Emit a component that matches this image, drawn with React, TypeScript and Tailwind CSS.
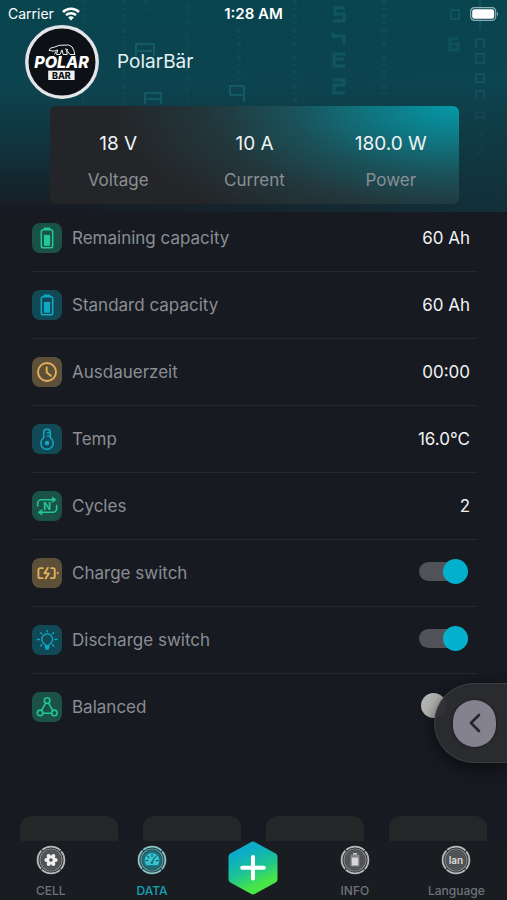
import { useState, type ReactNode } from 'react';
import { ChevronLeft } from 'lucide-react';

type Tone = 'green' | 'cyan' | 'amber';

const TONES: Record<Tone, string> = {
  green: 'bg-[#1a5248] text-[#22c793]',
  cyan: 'bg-[#114956] text-[#0fa9c6]',
  amber: 'bg-[#5d5038] text-[#e6b05a]',
};

function BatteryIcon() {
  return (
    <g>
      <rect x="9" y="6.5" width="11" height="17.5" rx="2" />
      <path d="M12 5.3h5" strokeWidth="1.8" />
      <rect x="11.5" y="11.5" width="6" height="10.5" fill="currentColor" stroke="none" />
    </g>
  );
}

function ClockIcon() {
  return (
    <g strokeWidth="1.8">
      <circle cx="14.5" cy="14.5" r="8.7" />
      <path d="M14.2 9.8v5.2l4 3.2" />
    </g>
  );
}

function ThermometerIcon() {
  return (
    <g>
      <path d="M11.3 13.4V8.2a3.2 3.2 0 0 1 6.4 0v5.2a6 6 0 1 1-6.4 0z" />
      <circle cx="14.5" cy="18.4" r="1.5" fill="currentColor" />
      <path d="M14.4 8.5h3M14.4 11.5h3" strokeWidth="1.2" />
    </g>
  );
}

function CycleIcon() {
  return (
    <g>
      <path d="M5.5 14.5V12a3.6 3.6 0 0 1 3.6-3.6H21" />
      <path d="M19.8 5.9l3.6 2.5-3.6 2.5z" fill="currentColor" strokeWidth="0.6" />
      <path d="M23.8 14v3a3.6 3.6 0 0 1-3.6 3.6H8" />
      <path d="M9.4 18.1l-3.6 2.5 3.6 2.5z" fill="currentColor" strokeWidth="0.6" />
      <text
        x="14.7"
        y="18"
        textAnchor="middle"
        fill="currentColor"
        stroke="none"
        className="font-['Inter',sans-serif] text-[10px] font-bold"
      >
        N
      </text>
    </g>
  );
}

function ChargeIcon() {
  return (
    <g strokeWidth="1.8">
      <path d="M10.5 9.8H7.8a1.6 1.6 0 0 0-1.6 1.6v6.4a1.6 1.6 0 0 0 1.6 1.6h2.4" />
      <path d="M18.6 9.8h1.8a1.6 1.6 0 0 1 1.6 1.6v6.4a1.6 1.6 0 0 1-1.6 1.6h-2.2" />
      <path d="M15.4 9.4L12 14.8h4.4l-3.2 5" />
      <circle cx="24.8" cy="14.6" r="1" fill="currentColor" stroke="none" />
    </g>
  );
}

function BulbIcon() {
  return (
    <g strokeWidth="1.3">
      <path d="M12.3 18.4a5.2 5.2 0 1 1 4.8 0l-1 1.6h-2.8z" />
      <path d="M13.2 21.4H16M13.8 23h1.6" strokeWidth="2" />
      <path d="M14.7 5.2v1.4M8.3 7.4l1.2 1.2M21 7.4l-1.2 1.2M5.2 14h2M22.2 14h2M8.2 20.4l1.3-1.3M21.2 20.4l-1.3-1.3" />
    </g>
  );
}

function BalanceIcon() {
  return (
    <g strokeWidth="1.5">
      <circle cx="14.6" cy="8.3" r="2.7" />
      <circle cx="7.8" cy="20.2" r="2.7" />
      <circle cx="21.6" cy="20.2" r="2.7" />
      <path d="M13.2 10.8l-4 7M16 10.8l4.1 7M10.6 20.6h8.2" />
    </g>
  );
}

function IconTile({ tone, children }: { tone: Tone; children: ReactNode }) {
  return (
    <span className={`block size-[30px] shrink-0 rounded-lg ${TONES[tone]}`}>
      <svg
        viewBox="0 0 29 29"
        className="size-full"
        fill="none"
        stroke="currentColor"
        strokeWidth="1.5"
        strokeLinecap="round"
        strokeLinejoin="round"
        aria-hidden="true"
      >
        {children}
      </svg>
    </span>
  );
}

/** Faint falling characters behind the header. */
function CodeRain() {
  return (
    <svg
      viewBox="0 0 507 212"
      preserveAspectRatio="none"
      className="absolute inset-0 size-full"
      fill="none"
      stroke="#2a9dac"
      aria-hidden="true"
    >
      <g opacity="0.26" strokeWidth="2">
        <path d="M136 56V44h18v12M138 51h14" />
        <path d="M145 104V93h16v11M147 99h13" />
        <path d="M230 95v-9h14v16M230 95h14" />
      </g>
      <g opacity="0.07" strokeWidth="3" strokeDasharray="5 3 2 4">
        <path d="M124 0v105M146 0v14" />
        <path d="M187 5v100" />
        <path d="M239 28v56" strokeWidth="4" />
        <path d="M295 0v104" strokeWidth="4" />
        <path d="M384 0v96" strokeWidth="5" />
        <path d="M83 0v104" />
      </g>
      <g opacity="0.2" strokeWidth="3">
        <path d="M345 8h-10v6h9v7h-11" />
        <path d="M333 33v3h11v8" />
        <path d="M345 54h-11v5h10M334 59v7h11" />
        <path d="M333 80h11v5h-10v8h11" />
      </g>
      <g opacity="0.16" strokeWidth="2">
        <path d="M451 10h8v9h-8z" />
        <path d="M458 39h-8v11h8v-6h-8" strokeWidth="3" />
        <path d="M480 0v12M480 18v12" />
        <path d="M476 48v-9h8v9M476 54h8v9h-8z" />
        <path d="M476 74h8v8h-8zM476 99v-8h8v8" />
        <path d="M476 112h8v6h-8z" opacity="0.6" />
        <path d="M478 132l6 3M478 154l6-8" opacity="0.5" />
      </g>
    </svg>
  );
}

function StatusBar() {
  return (
    <div className="relative grid h-7 grid-cols-3 items-center px-2 text-white">
      <div className="flex items-center gap-2 text-sm">
        <span>Carrier</span>
        <svg viewBox="0 0 18 14" className="h-[14px] w-[18px]" fill="none" stroke="currentColor" aria-label="Wi-Fi">
          <path d="M1 5a11.5 11.5 0 0 1 16 0" strokeWidth="2.6" />
          <path d="M4 8.2a7.2 7.2 0 0 1 10 0" strokeWidth="2.4" />
          <path d="M9 13.6l-2.8-3a4 4 0 0 1 5.6 0z" fill="currentColor" stroke="none" />
        </svg>
      </div>
      <span className="text-center text-[15px] leading-5 font-semibold">1:28 AM</span>
      <svg viewBox="0 0 29 14" className="h-[14px] w-[29px] justify-self-end" aria-label="Battery full">
        <rect x="0.7" y="0.7" width="25" height="12.6" rx="3.6" fill="none" stroke="#8fb0b6" strokeWidth="1.2" />
        <rect x="2.2" y="2.2" width="22" height="9.6" rx="2.2" fill="white" />
        <path d="M27 5v4a2.4 2.4 0 0 0 0-4z" fill="#8fb0b6" />
      </svg>
    </div>
  );
}

function Logo() {
  return (
    <svg viewBox="0 0 74 74" className="size-[74px]" role="img" aria-label="Polar Bär">
      <circle cx="37" cy="37" r="35.2" fill="#0d1116" stroke="#e3e5ea" strokeWidth="3.4" />
      <g fill="none" stroke="#f2f2f2" strokeLinejoin="round">
        <path d="M24 25.4l1.4-2.2 4.4-1.2 4.6-1.7 9.2-.3 3.6 2 2 4.4.6 3.6" />
        <path d="M24 25.4l5 .8 3.6-1.3-1 4.6H35l2-4.6 1.2 4.6h4l-.6-4.4 3.4 4.4h4.8" />
        <path d="M29.6 29.4l1.6-3M40 23.8l3 1" />
      </g>
      <rect x="23.2" y="45.6" width="26.4" height="9.4" fill="#f0f0f0" />
      <text textAnchor="middle" className="font-['Inter',sans-serif] font-extrabold">
        <tspan x="36.6" y="43" fill="white" className="text-[16px] italic">
          POLAR
        </tspan>
        <tspan x="36.4" y="53.6" fill="#0d1116" className="text-[9px]">
          BAR
        </tspan>
      </text>
    </svg>
  );
}

const STATS = [
  { label: 'Voltage', value: '18 V' },
  { label: 'Current', value: '10 A' },
  { label: 'Power', value: '180.0 W' },
];

function Header() {
  return (
    <header className="relative bg-[linear-gradient(to_bottom,#08454f_0%,#0c434e_42%,#123039_74%,#171a22_100%)] pb-2">
      <div className="absolute inset-0 bg-[radial-gradient(ellipse_at_bottom_right,#0d4651_0%,transparent_60%)] opacity-50" />
      <CodeRain />
      <StatusBar />
      <div className="relative -mt-[3px] flex items-center gap-[18px] px-[25px] pb-[7px]">
        <Logo />
        <h1 className="text-[19px] leading-7 text-[#e4f3f6]">PolarBär</h1>
      </div>
      <dl className="relative mr-12 ml-[50px] grid h-[98px] grid-cols-3 rounded-md bg-[#242528] bg-[radial-gradient(ellipse_85%_145%_at_top_right,#0599a8_0%,#0f7681_25%,#1a525a_48%,#22373c_72%,transparent_100%)] pt-[26px] text-center">
        {STATS.map((stat) => (
          <div key={stat.label} className="flex flex-col-reverse justify-end gap-3">
            <dt className="text-[17px] leading-6 text-[#8a8f94]">{stat.label}</dt>
            <dd className="text-[19px] leading-6 text-[#edf3f4]">{stat.value}</dd>
          </div>
        ))}
      </dl>
    </header>
  );
}

function RowShell({ children }: { children: ReactNode }) {
  return (
    <li className="flex h-[67px] items-center gap-[10px] border-b border-[#25282c] pr-[7px] last:border-transparent">
      {children}
    </li>
  );
}

const READINGS: { label: string; value: string; tone: Tone; icon: ReactNode }[] = [
  { label: 'Remaining capacity', value: '60 Ah', tone: 'green', icon: <BatteryIcon /> },
  { label: 'Standard capacity', value: '60 Ah', tone: 'cyan', icon: <BatteryIcon /> },
  { label: 'Ausdauerzeit', value: '00:00', tone: 'amber', icon: <ClockIcon /> },
  { label: 'Temp', value: '16.0°C', tone: 'cyan', icon: <ThermometerIcon /> },
  { label: 'Cycles', value: '2', tone: 'green', icon: <CycleIcon /> },
];

const SWITCHES: { id: string; label: string; tone: Tone; icon: ReactNode }[] = [
  { id: 'charge', label: 'Charge switch', tone: 'amber', icon: <ChargeIcon /> },
  { id: 'discharge', label: 'Discharge switch', tone: 'cyan', icon: <BulbIcon /> },
  { id: 'balanced', label: 'Balanced', tone: 'green', icon: <BalanceIcon /> },
];

function Readings() {
  const [on, setOn] = useState<Record<string, boolean>>({ charge: true, discharge: true, balanced: false });

  return (
    <ul className="relative -mt-[7px] mr-[30px] ml-8 text-[17px] leading-6">
      {READINGS.map((row) => (
        <RowShell key={row.label}>
          <IconTile tone={row.tone}>{row.icon}</IconTile>
          <span className="flex-1 text-[#8a8e94]">{row.label}</span>
          <span className="text-[#f1f2f3]">{row.value}</span>
        </RowShell>
      ))}
      {SWITCHES.map((row) => (
        <RowShell key={row.id}>
          <IconTile tone={row.tone}>{row.icon}</IconTile>
          <label htmlFor={row.id} className="flex-1 text-[#8a8e94]">
            {row.label}
          </label>
          <input
            id={row.id}
            type="checkbox"
            role="switch"
            checked={on[row.id]}
            onChange={(e) => setOn({ ...on, [row.id]: e.target.checked })}
            className="relative mb-1 h-[25px] w-[51px] cursor-pointer appearance-none before:absolute before:inset-x-0 before:top-[3px] before:h-[19px] before:rounded-full before:bg-[#515257] after:absolute after:top-0 after:left-[2px] after:size-[25px] after:rounded-full after:bg-[#b5b6b4] checked:before:right-[3px] checked:after:left-[24px] checked:after:bg-[#04b1cd] not-checked:before:left-4 not-checked:before:bg-[#303236]"
          />
        </RowShell>
      ))}
    </ul>
  );
}

function Badge({ active, children }: { active?: boolean; children: ReactNode }) {
  return (
    <svg viewBox="0 0 30 30" className="size-[30px]" fill="none" aria-hidden="true">
      <circle cx="15" cy="15" r="14" fill={active ? '#17383e' : '#292b2d'} />
      <circle
        cx="15"
        cy="15"
        r="13.4"
        stroke={active ? '#8fc4c6' : '#b9babb'}
        strokeWidth="1.8"
        strokeDasharray="20 1.05"
        strokeDashoffset="10"
      />
      <circle cx="15" cy="15" r="11" stroke={active ? '#5b9da2' : '#858688'} strokeWidth="1.2" />
      <circle
        cx="15"
        cy="15"
        r="9.4"
        fill={active ? '#1b6973' : '#505153'}
        stroke={active ? '#337982' : '#6b6c6e'}
        strokeWidth="0.8"
      />
      {children}
    </svg>
  );
}

function Tab({ label, active, children }: { label: string; active?: boolean; children: ReactNode }) {
  return (
    <button
      type="button"
      aria-current={active ? 'page' : undefined}
      className={`flex flex-col items-center gap-2 pt-1 text-xs leading-4 font-medium ${active ? 'text-[#14a3b8]' : 'text-[#6f7379]'}`}
    >
      <Badge active={active}>{children}</Badge>
      {label}
    </button>
  );
}

function TabBar() {
  return (
    <nav className="grid h-[59px] grid-cols-5 bg-[#191c21]">
      <Tab label="CELL">
        <g fill="#f0f0f0">
          <circle cx="15" cy="15" r="4.6" />
          <circle cx="19.6" cy="15" r="2" />
          <circle cx="10.4" cy="15" r="2" />
          <circle cx="12.6" cy="11" r="2" />
          <circle cx="17.4" cy="11" r="2" />
          <circle cx="12.6" cy="19" r="2" />
          <circle cx="17.4" cy="19" r="2" />
        </g>
        <circle cx="15" cy="15" r="1.8" fill="#505153" />
      </Tab>
      <Tab label="DATA" active>
        <path d="M8.8 19.4a7.4 7.4 0 1 1 12.4 0c-.4.6-1 .8-1.6.8h-9.2c-.6 0-1.2-.2-1.6-.8z" fill="#37c4d2" />
        <path
          d="M15 17.8l2.3-5M15 9.4v2M10.6 11.2l1.2 1.4M8.8 15.6h2M19.3 15.6h2M19.2 11l-.8 1"
          stroke="#145f69"
          strokeWidth="1.2"
          strokeLinecap="round"
        />
        <circle cx="14.8" cy="17.6" r="1.2" fill="#145f69" />
      </Tab>
      <button type="button" aria-label="Add" className="flex items-start justify-center">
        <svg viewBox="0 0 50 54" className="h-[54px] w-[50px]" aria-hidden="true">
          <defs>
            <linearGradient id="hex" gradientUnits="userSpaceOnUse" x1="14" y1="2" x2="36" y2="52">
              <stop offset="0.15" stopColor="#0cabc9" />
              <stop offset="0.52" stopColor="#1cc492" />
              <stop offset="0.82" stopColor="#48e548" />
            </linearGradient>
          </defs>
          <path
            d="M25 4l21 11.5v23L25 50 4 38.5v-23z"
            fill="url(#hex)"
            stroke="url(#hex)"
            strokeWidth="7"
            strokeLinejoin="round"
          />
          <path d="M25 16v21.5M14.2 26.8h21.6" stroke="white" strokeWidth="4" strokeLinecap="round" />
        </svg>
      </button>
      <Tab label="INFO">
        <rect x="10.5" y="9.5" width="9" height="12" rx="1.2" fill="#85868a" />
        <rect x="11.8" y="12.6" width="6.4" height="7.8" fill="#d6d7d8" />
        <path d="M13 8.8h4" stroke="#c9cacb" strokeWidth="1.6" />
      </Tab>
      <Tab label="Language">
        <text
          x="15"
          y="18.5"
          textAnchor="middle"
          fill="#dcdddd"
          className="font-['Inter',sans-serif] text-[10px] font-semibold"
        >
          lan
        </text>
      </Tab>
    </nav>
  );
}

export default function App() {
  return (
    <div className="relative flex min-h-screen flex-col overflow-hidden bg-[#171a21] font-['Inter',sans-serif]">
      <Header />
      <Readings />
      <button
        type="button"
        aria-label="Open panel"
        className="absolute top-[683px] right-0 flex h-20 w-[73px] items-center rounded-l-full border border-r-0 border-[#3c3e41] bg-[#2b2c2f]/95 pl-[18px] shadow-[0_4px_16px_rgba(0,0,0,0.6)]"
      >
        <span className="flex h-[47px] w-[43px] items-center justify-center rounded-full bg-[#85828f] shadow-[0_0_3px_rgba(0,0,0,0.6)]">
          <ChevronLeft className="size-8 text-[#25262b]" strokeWidth={2} />
        </span>
      </button>
      <div className="mt-auto grid grid-cols-4 gap-[25px] px-5">
        {Array.from({ length: 4 }).map((_, i) => (
          <div key={i} className="h-[25px] rounded-t-xl bg-[#242628]" />
        ))}
      </div>
      <TabBar />
    </div>
  );
}
